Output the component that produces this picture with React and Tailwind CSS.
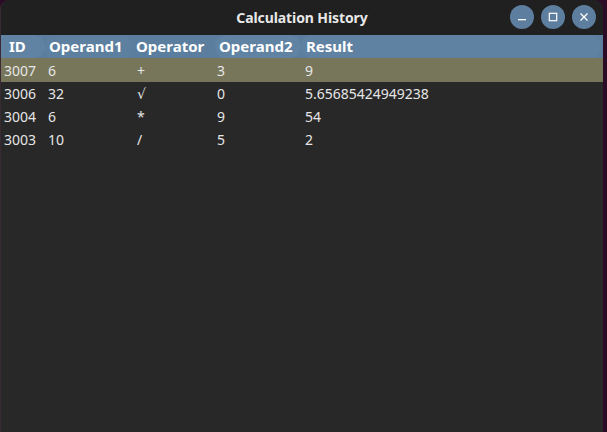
import React from 'react';

const rows = [
  { id: '3007', a: '6', op: '+', b: '3', r: '9' },
  { id: '3006', a: '32', op: '√', b: '0', r: '5.65685424949238' },
  { id: '3004', a: '6', op: '*', b: '9', r: '54' },
  { id: '3003', a: '10', op: '/', b: '5', r: '2' },
];

const font = { fontFamily: "'Noto Sans', 'DejaVu Sans', sans-serif" };

const WinButton = ({ children }) => (
  <div className="w-6 h-6 rounded-full bg-[#5d7e9e] flex items-center justify-center text-white">
    {children}
  </div>
);

const App = () => {
  return (
    <div className="w-[607px] h-[432px] bg-[#2c0b26] flex" style={font}>
      <div className="w-[603px] h-full rounded-t-[9px] bg-[#282828] flex flex-col overflow-hidden border-l border-[#3a2a36]">
        {/* title bar */}
        <div className="h-[35px] bg-[#202020] relative flex items-center justify-center shrink-0">
          <span className="text-[14px] font-bold text-[#e8e8e8] tracking-[-0.1px]">Calculation History</span>
          <div className="absolute right-[7px] top-[5px] flex gap-[7px]">
            <WinButton>
              <svg width="10" height="10" viewBox="0 0 10 10"><rect x="1" y="7" width="8" height="1.3" fill="white" /></svg>
            </WinButton>
            <WinButton>
              <svg width="10" height="10" viewBox="0 0 10 10"><rect x="1.3" y="1.3" width="7.4" height="7.4" fill="none" stroke="white" strokeWidth="1.2" /></svg>
            </WinButton>
            <WinButton>
              <svg width="10" height="10" viewBox="0 0 10 10"><path d="M1.5 1.5 L8.5 8.5 M8.5 1.5 L1.5 8.5" stroke="white" strokeWidth="1.3" /></svg>
            </WinButton>
          </div>
        </div>

        {/* header */}
        <div className="h-[23px] bg-[#5b7e9e] flex text-[15px] font-bold text-white shrink-0 pr-[2px]">
          <div className="w-[44px] pl-[8px] flex items-center rounded-r-full bg-[#6083a3]">ID</div>
          <div className="w-[87px] pl-[4px] flex items-center rounded-full bg-[#5d80a0]">Operand1</div>
          <div className="w-[83px] pl-[4px] flex items-center">Operator</div>
          <div className="w-[86px] pl-[4px] flex items-center rounded-full bg-[#6083a3]">Operand2</div>
          <div className="flex-1 pl-[5px] flex items-center rounded-full bg-[#5f82a2]">Result</div>
        </div>

        {/* rows */}
        <div className="flex flex-col text-[14px] text-[#e6e6e6]">
          {rows.map((row, i) => (
            <div key={row.id} className={`flex items-center ${i === 0 ? 'h-[24px] bg-[#77765a]' : 'h-[23px]'}`}>
              <div className="w-[44px] pl-[3px]">{row.id}</div>
              <div className="w-[88px] pl-[3px]">{row.a}</div>
              <div className="w-[82px] pl-[4px]">{row.op}</div>
              <div className="w-[87px] pl-[2px]">{row.b}</div>
              <div className="flex-1 pl-[3px]">{row.r}</div>
            </div>
          ))}
        </div>
      </div>
    </div>
  );
};

export default App;
